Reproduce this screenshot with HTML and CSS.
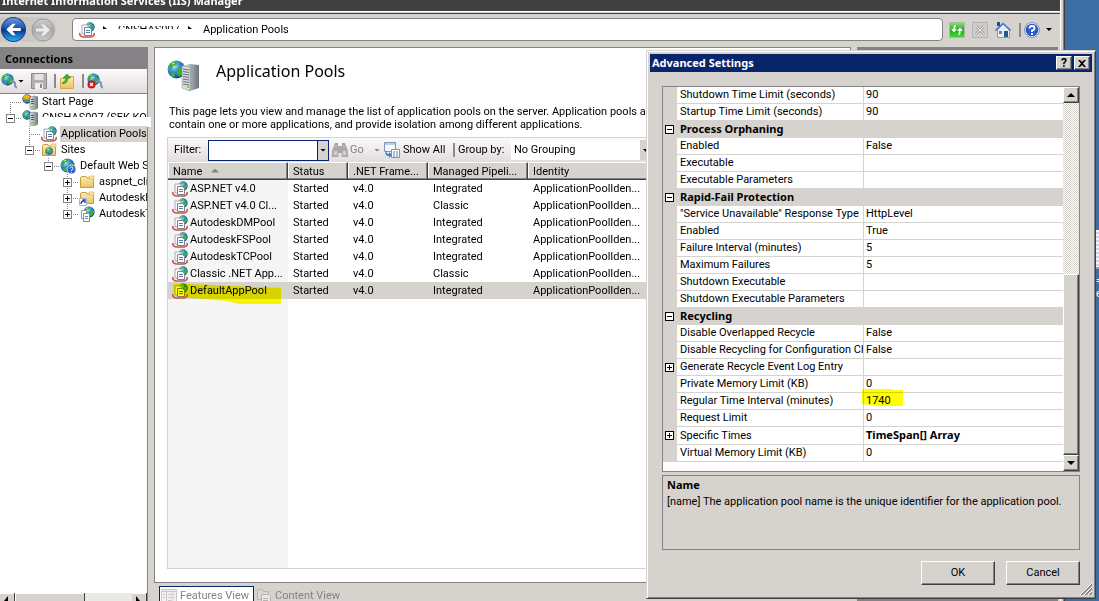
FILE: index.html
```html
<!DOCTYPE html>
<html lang="en">
<head>
<meta charset="utf-8">
<title>Internet Information Services (IIS) Manager</title>
<link rel="stylesheet" href="styles.css">
</head>
<body>
<svg class="defs" aria-hidden="true">
  <defs>
    <radialGradient id="sea" cx=".35" cy=".3" r=".8"><stop offset="0" stop-color="#bfe6ff"/><stop offset=".4" stop-color="#3c8de0"/><stop offset="1" stop-color="#0a2f95"/></radialGradient>
    <linearGradient id="navBlue" x2="0" y2="1"><stop offset="0" stop-color="#6f9ae0"/><stop offset=".45" stop-color="#1c4fb4"/><stop offset=".5" stop-color="#05308c"/><stop offset="1" stop-color="#27b6fa"/></linearGradient>
    <linearGradient id="navGray" x2="0" y2="1"><stop offset="0" stop-color="#d0d0d0"/><stop offset=".5" stop-color="#a9a9a9"/><stop offset="1" stop-color="#c9c9c9"/></linearGradient>
    <linearGradient id="steel" x2="1" y2="0"><stop offset="0" stop-color="#eceef0"/><stop offset=".5" stop-color="#a7adb3"/><stop offset="1" stop-color="#6d747b"/></linearGradient>
    <linearGradient id="manila" x2="0" y2="1"><stop offset="0" stop-color="#fdeeb5"/><stop offset="1" stop-color="#edc15c"/></linearGradient>
    <linearGradient id="leaf" x2="0" y2="1"><stop offset="0" stop-color="#8be07d"/><stop offset=".5" stop-color="#22ab1c"/><stop offset="1" stop-color="#3fe032"/></linearGradient>
  </defs>
  <symbol id="globe" viewBox="0 0 16 16"><circle cx="8" cy="8" r="7.5" fill="url(#sea)"/><path d="M3 3q3-3 6-2l-1 3-3 1-1 3-3-1q0-3 2-4zM9 7l4-2 2 3-2 4-3 2-2-3zM4 10l3 1-1 4-3-2z" fill="#35b336"/><path d="M4 3l3-1-2 2z" fill="#d9ffd0"/></symbol>
  <symbol id="pool" viewBox="0 0 16 16"><use href="#globe" x="6" y="0" width="10" height="10"/><path d="M1 11q-1 3 3 4h8q4-1 3-4" fill="none" stroke="#c9534b" stroke-width="1.600"/><path d="M3 3h6v9H3z" fill="#fff" stroke="#a3abb3"/><path d="M5.500 5.500h5l2 2v6h-7z" fill="#fff" stroke="#7a838c"/><path d="M7 8.500h4M7 10.500h4" stroke="#547cae"/></symbol>
  <symbol id="server" viewBox="0 0 16 16"><use href="#globe" x="0" y="0" width="10" height="10"/><path d="M8 3l4-1 4 1v11l-4 2-4-1z" fill="url(#steel)" stroke="#747a80" stroke-width=".6"/><path d="M9 5.500h3M9 7.500h3M9 9.500h3" stroke="#596068"/><path d="M9 12h3v2H9z" fill="#6adf29"/></symbol>
  <symbol id="start" viewBox="0 0 16 16"><use href="#server" width="16" height="16"/><path d="M0 4l4-4 5 3-2 1v2L3 5z" fill="#f6b21d" stroke="#bf7b0a" stroke-width=".6"/></symbol>
  <symbol id="bigserver" viewBox="0 0 34 34"><use href="#globe" x="0" y="1" width="19" height="19"/><path d="M15 7l8-2 9 1v23l-9 3-8-3z" fill="url(#steel)"/><path d="M15 7l8 1v24l-8-3z" fill="#d8dcdf" stroke="#858b91" stroke-width=".5"/><path d="M16 10l6 1M16 12.500l6 1M16 15l6 1M16 17.500l6 1M16 20l6 1M16 22.500l6 1M16 25l6 1" stroke="#676e75"/><path d="M20 27h2v2h-2z" fill="#8ce000"/></symbol>
  <symbol id="folder" viewBox="0 0 16 16"><path d="M1.500 13.500v-10L3 2.500h4l1 1.500h6.500v9.500z" fill="url(#manila)" stroke="#c99c3e"/><path d="M10 2h5v3h-5z" fill="#fbe69e" stroke="#c99c3e" stroke-width=".5"/></symbol>
  <symbol id="sites" viewBox="0 0 16 16"><use href="#folder" width="16" height="16"/><use href="#globe" x="4" y="5" width="8" height="8"/></symbol>
  <symbol id="site" viewBox="0 0 16 16"><use href="#globe" width="15" height="15"/><circle cx="11.500" cy="11.500" r="4.500" fill="#2e5fc4" stroke="#dfe9fb"/><path d="M10 10.500q0-1.500 1.500-1.500t1.500 1.500-1.500 1.500v1M11.500 14v.8" stroke="#fff" fill="none"/></symbol>
  <symbol id="vdir" viewBox="0 0 16 16"><use href="#folder" width="16" height="16"/><path d="M.5 8.500h7v7h-7z" fill="#fff" stroke="#a9b3cc"/><path d="M2 14q0-3 3-3M3.500 10H6v3" stroke="#2b3f9c" fill="none" stroke-width="1.300"/></symbol>
  <symbol id="webapp" viewBox="0 0 16 16"><use href="#globe" x="4" y="0" width="12" height="12"/><path d="M2.500 4.500h5v8h-5z" fill="#fff" stroke="#959ca3"/><path d="M4.500 7.500h5l1 1v7h-6z" fill="#fff" stroke="#838b93"/><path d="M6 10.500h3M6 12.500h3" stroke="#6a87ad"/></symbol>
  <symbol id="connect" viewBox="0 0 16 16"><use href="#globe" width="13" height="13"/><path d="M9 9l3-1 2 2v3l2 2" stroke="#8198ad" stroke-width="2" fill="none"/></symbol>
  <symbol id="save" viewBox="0 0 16 16"><path d="M.5.500h15v15h-15z" fill="#b4b0b0" stroke="#8e8a8a"/><path d="M3.500 1h9v6h-9z" fill="#e5e2e2"/><path d="M4 10h8v6H4z" fill="#f1efef"/><path d="M9 11h2v4H9z" fill="#8e8a8a"/></symbol>
  <symbol id="up" viewBox="0 0 16 16"><path d="M1.500 15.500V5.500h5l1-2h7v12z" fill="url(#manila)" stroke="#d3aa50"/><path d="M4 11q5-1 5-6h3L8 1 4 5h3q0 3-4 5z" fill="#38b52b" stroke="#1f8415" stroke-width=".5"/></symbol>
  <symbol id="disconnect" viewBox="0 0 16 16"><use href="#connect" width="16" height="16"/><circle cx="4.500" cy="11.500" r="4" fill="#c91616"/><path d="M3 10l3 3M6 10l-3 3" stroke="#fff" stroke-width="1.300"/></symbol>
  <symbol id="back" viewBox="0 0 24 24"><circle cx="12" cy="12" r="11.500" fill="url(#navBlue)" stroke="#25427d"/><path d="M19 10.500h-8l3-4h-3l-6 5.500 6 5.500h3l-3-4h8z" fill="#fff"/></symbol>
  <symbol id="forward" viewBox="0 0 24 24"><circle cx="12" cy="12" r="11" fill="url(#navGray)" stroke="#999"/><path d="M5 10.500h8l-3-4h3l6 5.500-6 5.500h-3l3-4H5z" fill="#ececec"/></symbol>
  <symbol id="refresh" viewBox="0 0 16 16"><path d="M.5.500h15v15h-15z" fill="url(#leaf)" stroke="#a4bfa0"/><path d="M7 3q-3 0-2.500 4H2l3 3.500L8 7H6q0-2 1-4zM9 13q3 0 2.500-4H14l-3-3.500L8 9h2q0 2-1 4z" fill="#fff"/></symbol>
  <symbol id="stop" viewBox="0 0 16 16"><path d="M.5.500h15v15h-15z" fill="#cfcdcc" stroke="#b5b3b2"/><path d="M4 4l8 8M12 4l-8 8" stroke="#a6a3a3" stroke-width="2.500"/><path d="M4 4l8 8M12 4l-8 8" stroke="#eee"/></symbol>
  <symbol id="home" viewBox="0 0 16 16"><path d="M2.500 8v7.500h12V8L8 2z" fill="#e4eefb" stroke="#7b9bcc"/><path d="M.5 8.500L8 1.500l7.500 7" stroke="#4c77c5" stroke-width="1.600" fill="none"/><path d="M2 0h3v4H2z" fill="#2546b6"/><path d="M9 9h4v6H9z" fill="#295392"/><path d="M4 9h3v3H4z" fill="#a27b42"/></symbol>
  <symbol id="help" viewBox="0 0 16 16"><circle cx="8" cy="8" r="7.500" fill="#e9eefb" stroke="#8490ae"/><circle cx="8" cy="8" r="6.300" fill="#285acb"/><path d="M5.500 6.500q0-2.500 2.500-2.500t2.500 2.200Q10.500 8 8 8.500V10M8 11v2" stroke="#fff" stroke-width="1.800" fill="none"/></symbol>
  <symbol id="find" viewBox="0 0 16 16"><path d="M3 1h3v3h4V1h3l3 8v6H9.500v-4h-3v4H0V9z" fill="#a9a6a6"/><path d="M2 9h3v4H2zM11 9h3v4h-3zM4 3v3M12 3v3" fill="#d5d2d2" stroke="#c6c3c3"/></symbol>
  <symbol id="showall" viewBox="0 0 16 16"><path d="M.5.500h11v9H.5z" fill="#f4f7fb" stroke="#7f96b5"/><path d="M1 1h10v2H1z" fill="#b8cfe8"/><path d="M7.500 7.500h8v8h-8z" fill="#fff" stroke="#8394aa"/><path d="M9 10h2M12 10h2M9 12h2M12 12h2M9 14h2M12 14h2" stroke="#5479ad"/><path d="M2 8q0 4 3 4v-2l3 3-3 3v-2q-5 0-3-6z" fill="#2c83dc"/></symbol>
  <symbol id="features" viewBox="0 0 16 16"><path d="M.5 1.500h15v14H.5z" fill="#f3eff2" stroke="#cbc6ca"/><path d="M1 3.500h14M5.500 4v11M11 4v11M7 6.500h3M7 9.500h3M7 12.500h3M12 6.500h2M12 9.500h2M2 6.500h2M2 9.500h2" stroke="#cbc6ca"/></symbol>
  <symbol id="content" viewBox="0 0 16 16"><path d="M1.500 1.500h5l1 2h5v8h-11z" fill="#dbd7d7" stroke="#b8b4b4"/><path d="M5.500 6.500h7l2 2v7h-9z" fill="#eae7e7" stroke="#b8b4b4"/><path d="M7 10.500h5M7 12.500h5" stroke="#b8b4b4"/></symbol>
</svg>

<main class="app">
  <header class="app-title">Internet Information Services (IIS) Manager</header>
  <nav class="navbar">
    <div class="nav-round">
      <button class="flat" aria-label="Back"><svg class="i25"><use href="#back"/></svg></button>
      <button class="flat" aria-label="Forward"><svg class="i24"><use href="#forward"/></svg></button>
    </div>
    <div class="address">
      <svg class="i16"><use href="#pool"/></svg>
      <span class="crumb-arrow erased"></span>
      <span class="crumb-name erased">CNSHAS007</span>
      <span class="crumb-arrow erased"></span>
      <span>Application Pools</span>
    </div>
    <div class="nav-tools">
      <button class="flat" aria-label="Refresh"><svg class="i16"><use href="#refresh"/></svg></button>
      <button class="flat" aria-label="Stop"><svg class="i16"><use href="#stop"/></svg></button>
      <button class="flat" aria-label="Home"><svg class="i16"><use href="#home"/></svg></button>
      <span class="sep"></span>
      <button class="flat help" aria-label="Help"><svg class="i16"><use href="#help"/></svg><i class="down"></i></button>
    </div>
  </nav>

  <div class="workspace">
    <aside class="connections">
      <h2 class="pane-title">Connections</h2>
      <div class="conn-tools">
        <button class="flat" aria-label="Connect"><svg class="i16"><use href="#connect"/></svg><i class="down"></i></button>
        <button class="flat" aria-label="Save"><svg class="i16"><use href="#save"/></svg></button>
        <span class="sep"></span>
        <button class="flat" aria-label="Up"><svg class="i16"><use href="#up"/></svg></button>
        <span class="sep"></span>
        <button class="flat" aria-label="Disconnect"><svg class="i16"><use href="#disconnect"/></svg></button>
      </div>
      <ul class="tree">
        <li class="node d0 first"><i class="leaf"></i><i class="dots"></i><svg class="i16"><use href="#start"/></svg><span>Start Page</span></li>
        <li class="node d0 last"><button class="box" aria-label="Collapse"></button><i class="dots"></i><svg class="i16"><use href="#server"/></svg><span class="erased-node">CNSHAS007 (SEK-KOI</span><i class="smear"></i></li>
        <li class="node d1"><i class="leaf"></i><i class="dots"></i><svg class="i16"><use href="#pool"/></svg><span class="selected">Application Pools</span></li>
        <li class="node d1 last"><button class="box" aria-label="Collapse"></button><i class="dots"></i><svg class="i16"><use href="#sites"/></svg><span>Sites</span></li>
        <li class="node d2 last"><button class="box" aria-label="Collapse"></button><i class="dots"></i><svg class="i16"><use href="#site"/></svg><span>Default Web Site</span></li>
        <li class="node d3"><button class="box plus" aria-label="Expand"></button><i class="dots"></i><svg class="i16"><use href="#folder"/></svg><span>aspnet_client</span></li>
        <li class="node d3"><button class="box plus" aria-label="Expand"></button><i class="dots"></i><svg class="i16"><use href="#vdir"/></svg><span>AutodeskDM</span></li>
        <li class="node d3 last"><button class="box plus" aria-label="Expand"></button><i class="dots"></i><svg class="i16"><use href="#webapp"/></svg><span>AutodeskTC</span></li>
      </ul>
      <div class="hscroll"><button class="arrow-left" aria-label="Scroll left"></button><i class="hthumb"></i><button class="arrow-right" aria-label="Scroll right"></button></div>
    </aside>

    <section class="center">
      <div class="feature">
        <div class="feature-head"><svg class="i34"><use href="#bigserver"/></svg><h1>Application Pools</h1></div>
        <p class="intro">This page lets you view and manage the list of application pools on the server. Application pools are<br>contain one or more applications, and provide isolation among different applications.</p>
        <div class="list">
          <div class="filterbar">
            <label for="filter">Filter:</label>
            <div class="combo"><input id="filter" type="text"><button aria-label="Filter history"><i class="down"></i></button></div>
            <button class="flat go"><svg class="i16"><use href="#find"/></svg><span>Go</span><i class="down"></i></button>
            <button class="flat show"><svg class="i16"><use href="#showall"/></svg><span>Show All</span></button>
            <span class="sep"></span>
            <label for="group">Group by:</label>
            <div class="group"><select id="group"><option>No Grouping</option></select><i class="down"></i></div>
          </div>
          <table class="pools">
            <thead><tr><th class="c-name">Name <i class="sort"></i></th><th class="c-status">Status</th><th class="c-net">.NET Frame...</th><th class="c-pipe">Managed Pipeli...</th><th class="c-id">Identity</th><th></th></tr></thead>
            <tbody>
              <tr><td><div class="pool"><svg class="i16"><use href="#pool"/></svg>ASP.NET v4.0</div></td><td>Started</td><td>v4.0</td><td>Integrated</td><td>ApplicationPoolIden...</td><td></td></tr>
              <tr><td><div class="pool"><svg class="i16"><use href="#pool"/></svg>ASP.NET v4.0 Cl...</div></td><td>Started</td><td>v4.0</td><td>Classic</td><td>ApplicationPoolIden...</td><td></td></tr>
              <tr><td><div class="pool"><svg class="i16"><use href="#pool"/></svg>AutodeskDMPool</div></td><td>Started</td><td>v4.0</td><td>Integrated</td><td>ApplicationPoolIden...</td><td></td></tr>
              <tr><td><div class="pool"><svg class="i16"><use href="#pool"/></svg>AutodeskFSPool</div></td><td>Started</td><td>v4.0</td><td>Integrated</td><td>ApplicationPoolIden...</td><td></td></tr>
              <tr><td><div class="pool"><svg class="i16"><use href="#pool"/></svg>AutodeskTCPool</div></td><td>Started</td><td>v4.0</td><td>Integrated</td><td>ApplicationPoolIden...</td><td></td></tr>
              <tr><td><div class="pool"><svg class="i16"><use href="#pool"/></svg>Classic .NET App...</div></td><td>Started</td><td>v4.0</td><td>Classic</td><td>ApplicationPoolIden...</td><td></td></tr>
              <tr class="current"><td><div class="pool"><svg class="i16"><use href="#pool"/></svg>DefaultAppPool<svg class="marker pool-marker" viewBox="0 0 108 22"><path d="M0 2h18l90 4v16H66l-12-3-36-3-17-3z"/></svg></div></td><td>Started</td><td>v4.0</td><td>Integrated</td><td>ApplicationPoolIden...</td><td></td></tr>
            </tbody>
          </table>
        </div>
      </div>
      <div class="tabs">
        <button class="tab active"><svg class="i16"><use href="#features"/></svg>Features View</button>
        <button class="tab"><svg class="i16"><use href="#content"/></svg>Content View</button>
      </div>
    </section>
    <aside class="actions"></aside>
  </div>
</main>

<div class="desktop-item"><i class="thumb"></i><span>=</span><span>e</span></div>

<section class="dialog" role="dialog" aria-labelledby="dlg">
  <header class="dlg-title"><h2 id="dlg">Advanced Settings</h2><button aria-label="Help">?</button><button aria-label="Close"><svg class="x" viewBox="0 0 8 7"><path d="M0 0h2l2 2 2-2h2L5 3.500 8 7H6L4 5 2 7H0l3-3.500z"/></svg></button></header>
  <div class="grid">
    <table class="props">
      <tbody>
        <tr><td></td><td>Shutdown Time Limit (seconds)</td><td>90</td></tr>
        <tr><td></td><td>Startup Time Limit (seconds)</td><td>90</td></tr>
        <tr class="cat"><td><button class="box" aria-label="Collapse"></button></td><th colspan="2">Process Orphaning</th></tr>
        <tr><td></td><td>Enabled</td><td>False</td></tr>
        <tr><td></td><td>Executable</td><td></td></tr>
        <tr><td></td><td>Executable Parameters</td><td></td></tr>
        <tr class="cat"><td><button class="box" aria-label="Collapse"></button></td><th colspan="2">Rapid-Fail Protection</th></tr>
        <tr><td></td><td>"Service Unavailable" Response Type</td><td>HttpLevel</td></tr>
        <tr><td></td><td>Enabled</td><td>True</td></tr>
        <tr><td></td><td>Failure Interval (minutes)</td><td>5</td></tr>
        <tr><td></td><td>Maximum Failures</td><td>5</td></tr>
        <tr><td></td><td>Shutdown Executable</td><td></td></tr>
        <tr><td></td><td>Shutdown Executable Parameters</td><td></td></tr>
        <tr class="cat"><td><button class="box" aria-label="Collapse"></button></td><th colspan="2">Recycling</th></tr>
        <tr><td></td><td>Disable Overlapped Recycle</td><td>False</td></tr>
        <tr><td></td><td>Disable Recycling for Configuration Changes</td><td>False</td></tr>
        <tr><td><button class="box plus" aria-label="Expand"></button></td><td>Generate Recycle Event Log Entry</td><td></td></tr>
        <tr><td></td><td>Private Memory Limit (KB)</td><td>0</td></tr>
        <tr><td></td><td>Regular Time Interval (minutes)</td><td class="marked">1740<svg class="marker time-marker" viewBox="0 0 41 18"><path d="M0 0h30v1h11v16H16l-16-2z"/></svg></td></tr>
        <tr><td></td><td>Request Limit</td><td>0</td></tr>
        <tr><td><button class="box plus" aria-label="Expand"></button></td><td>Specific Times</td><td><b>TimeSpan[] Array</b></td></tr>
        <tr><td></td><td>Virtual Memory Limit (KB)</td><td>0</td></tr>
      </tbody>
    </table>
    <div class="vscroll"><button aria-label="Scroll up"><i class="up-tri"></i></button><i class="vthumb"></i><button aria-label="Scroll down"><i class="down-tri"></i></button></div>
  </div>
  <div class="hint"><b>Name</b><p>[name] The application pool name is the unique identifier for the application pool.</p></div>
  <footer class="dlg-foot"><button class="push">OK</button><button class="push">Cancel</button></footer>
  <svg class="grip" viewBox="0 0 12 12"><path d="M1 12L12 1M5 12l7-7M9 12l3-3" stroke="#808080" stroke-width="2"/><path d="M0 12L12 0M4 12l8-8M8 12l4-4" stroke="#fff"/></svg>
</section>
</body>
</html>
```
FILE: styles.css
```css
* { box-sizing: border-box; }
body {
  margin: 0;
  height: 100vh;
  overflow: hidden;
  position: relative;
  background: #3a6ea5;
  color: #000;
  font: 11px/16px Roboto, "Liberation Sans", sans-serif;
}
h1, h2, p, ul { margin: 0; padding: 0; }
h1, h2, b, .props th, .app-title { font-family: "Noto Sans", "Open Sans", sans-serif; }
button, input, select { font: inherit; color: inherit; margin: 0; padding: 0; border-radius: 0; }
svg { display: block; flex: none; }
i { flex: none; }
.defs { position: absolute; width: 0; height: 0; }
.i16 { width: 16px; height: 16px; }
.i24 { width: 24px; height: 24px; }
.i25 { width: 25px; height: 25px; }
.i34 { width: 34px; height: 34px; }
.flat { display: flex; align-items: center; border: 0; background: none; }
.down {
  width: 6px;
  height: 3px;
  background: currentColor;
  clip-path: polygon(0 0, 100% 0, 50% 100%);
}
.sep { flex: none; width: 2px; height: 14px; background: #8c8a8c; }

/* Main window */
.app {
  display: flex;
  flex-direction: column;
  height: 100vh;
  margin-right: 34px;
  background: #d6d3ce;
  border-right: 1px solid #404040;
  box-shadow: inset -1px 0 #808080, inset -3px 0 #d6d3ce, inset -4px 0 #fff;
}
.app-title {
  height: 11px;
  flex: none;
  margin-right: 4px;
  padding-left: 2px;
  overflow: hidden;
  background: #404040;
  color: #fff;
  font-size: 11px;
  font-weight: bold;
  line-height: 2px;
}
.navbar {
  display: flex;
  flex: none;
  align-items: center;
  height: 36px;
  margin-right: 4px;
  padding-right: 8px;
  border-top: 1px solid #fff;
  box-shadow: inset 0 1px #d6d3ce, inset 0 2px #404040;
}
.nav-round {
  display: flex;
  gap: 5px;
  align-items: center;
  width: 56px;
  margin-right: 16px;
  padding-left: 1px;
  border-radius: 0 12px 12px 0;
  background: #cbc8c4;
}
.address {
  flex: 1;
  display: flex;
  align-items: center;
  height: 23px;
  padding-left: 6px;
  background: #fff;
  border: 1px solid #848284;
  border-radius: 4px;
}
.erased { overflow: hidden; }
.crumb-arrow { width: 4px; height: 3px; margin: 0 11px 4px 8px; background: #000; clip-path: polygon(0 0, 100% 100%, 0 100%); }
.crumb-name { width: 62px; height: 3px; margin-bottom: 4px; line-height: 8px; }
.nav-tools { display: flex; align-items: center; gap: 7px; margin-left: 6px; }
.nav-tools .sep { margin-left: 1px; }
.help { gap: 6px; margin-left: -4px; }

.workspace { display: flex; flex: 1; min-height: 0; margin-right: 6px; }

/* Connections pane */
.connections {
  display: flex;
  flex-direction: column;
  flex: none;
  width: 148px;
  border-right: 1px solid #848284;
  background: #fff;
}
.pane-title {
  flex: none;
  height: 22px;
  padding-left: 5px;
  background: #848284;
  font-size: 11px;
  line-height: 23px;
}
.conn-tools {
  display: flex;
  flex: none;
  align-items: center;
  gap: 7px;
  height: 25px;
  padding-left: 1px;
  border-bottom: 1px solid #848284;
  background: linear-gradient(#fcf9fb, #e2dcdc);
}
.conn-tools .flat { gap: 1px; }
.conn-tools .sep { margin-right: -4px; }
.tree { flex: 1; list-style: none; }
.node {
  --x: 10px;
  --line: 16px;
  --from: 0px;
  position: relative;
  display: flex;
  align-items: center;
  height: 16px;
  white-space: nowrap;
  background: repeating-linear-gradient(#848284 0 1px, transparent 1px 2px) var(--x) var(--from) / 1px var(--line) no-repeat;
}
.node > span { margin-left: 3px; padding: 0 1px; overflow: hidden; }
.node .i16 { z-index: 1; }
.d0 { padding-left: 6px; }
.d1 { padding-left: 25px; --x: 29px; }
.d2 { padding-left: 44px; --x: 48px; }
.d3 { padding-left: 63px; --x: 67px; }
.first { --from: 8px; --line: 8px; }
.last { --line: 8px; }
.leaf { width: 9px; height: 1px; padding-left: 4px; background: repeating-linear-gradient(90deg, #848284 0 1px, transparent 1px 2px) content-box; }
.dots { width: 7px; height: 1px; background: repeating-linear-gradient(90deg, transparent 0 1px, #848284 1px 2px); }
.box {
  display: block;
  flex: none;
  width: 9px;
  height: 9px;
  border: 1px solid #848284;
  background: linear-gradient(#000, #000) center / 5px 1px no-repeat, #fff;
}
.plus { background: linear-gradient(#000, #000) center / 5px 1px no-repeat, linear-gradient(#000, #000) center / 1px 5px no-repeat, #fff; }
.selected { background: #d6d3ce; }
.erased-node { height: 16px; }
.smear { position: absolute; left: 36px; top: 7px; width: 115px; height: 10px; background: #fff; }
.hscroll { display: flex; justify-content: space-between; height: 8px; background: #ebe9e6; }
.hscroll button { width: 15px; border: 1px solid #404040; border-width: 0 1px 0 0; background: #d6d3ce; box-shadow: inset 0 1px #fff; }
.hthumb { width: 70px; margin-right: auto; border-right: 1px solid #404040; background: #d6d3ce; box-shadow: inset 1px 1px #fff; }
.arrow-left::before, .arrow-right::before { content: ""; display: block; width: 4px; height: 5px; margin: 3px 0 0 4px; background: #000; clip-path: polygon(100% 0, 100% 100%, 0 100%); }
.arrow-right::before { clip-path: polygon(0 0, 100% 100%, 0 100%); }

/* Feature page */
.center { display: flex; flex: 1; flex-direction: column; min-width: 0; margin: 0 6px; }
.feature {
  display: flex;
  flex: 1;
  flex-direction: column;
  min-height: 0;
  padding: 11px 12px 13px;
  background: #fff;
  border: 1px solid #848284;
}
.feature-head { display: flex; gap: 15px; }
h1 { font-size: 16px; font-weight: normal; line-height: 25px; }
.intro { margin: 12px 2px 6px; line-height: 13px; white-space: nowrap; overflow: hidden; }
.list {
  display: flex;
  flex: 1;
  flex-direction: column;
  border: 1px solid #d6d3ce;
  background: linear-gradient(#f5f5f5, #f5f5f5) 0 0 / 120px 100% no-repeat;
}
.filterbar {
  display: flex;
  align-items: center;
  height: 24px;
  padding-left: 6px;
  background: linear-gradient(#fcf9fb, #e2dcdc);
  white-space: nowrap;
}
.filterbar label:first-child { width: 34px; }
.combo { display: flex; width: 121px; height: 21px; border: 1px solid #08246b; background: #fff; }
.combo input { flex: 1; min-width: 0; border: 0; outline: 0; background: none; }
.combo button { display: flex; align-items: center; justify-content: center; width: 11px; border: 0; border-left: 1px solid #08246b; background: #d6d3ce; }
.go { width: 48px; gap: 2px; margin-left: 3px; color: #848284; }
.go .down { margin-left: auto; }
.show { gap: 3px; width: 69px; margin-left: 4px; }
.filterbar .sep { margin-right: 3px; }
.filterbar label[for="group"] { width: 53px; }
.group { position: relative; width: 142px; }
.group select { appearance: none; display: block; width: 100%; height: 20px; padding-left: 3px; border: 0; background: linear-gradient(90deg, #fff 129px, #d6d3ce 129px); }
.group .down { position: absolute; left: 132px; top: 9px; }
.pools { width: 100%; table-layout: fixed; border-collapse: separate; border-spacing: 0; }
.pools th {
  height: 18px;
  padding: 0 0 0 5px;
  border: 1px solid #fff;
  border-width: 1px 1px 1px 0;
  border-right-color: #404040;
  border-bottom-color: #404040;
  background: #d6d3ce;
  box-shadow: inset -1px -1px #848284, inset 1px 0 #fff;
  font-weight: normal;
  line-height: 15px;
  text-align: left;
  white-space: nowrap;
}
.pools td { height: 17px; padding: 0 0 0 5px; line-height: 17px; white-space: nowrap; }
.pools td:first-child { padding-left: 4px; }
.c-name { width: 120px; }
.c-status { width: 60px; }
.c-net { width: 80px; }
.c-pipe { width: 100px; }
.c-id { width: 120px; }
.sort { display: inline-block; width: 8px; height: 4px; margin: 0 0 2px 6px; background: #848284; clip-path: polygon(50% 0, 100% 100%, 0 100%); }
.pool { position: relative; display: flex; align-items: center; gap: 2px; height: 17px; }
.current { background: #d6d3ce; }
.marker { position: absolute; fill: #ff0; mix-blend-mode: multiply; }
.pool-marker { left: 1px; top: 0; width: 108px; height: 22px; }
.tabs { display: flex; height: 18px; padding: 3px 0 0 5px; overflow: hidden; color: #848284; }
.tab { display: flex; flex: none; align-items: center; gap: 3px; width: 95px; height: 20px; padding: 0 0 0 1px; border: 1px solid transparent; background: none; white-space: nowrap; }
.tab.active { border-color: #08246b; background: #fff; }
.actions { width: 201px; background: #848284; }

/* Desktop behind the windows */
.desktop-item { position: absolute; right: 0; top: 230px; width: 3px; color: #fff; line-height: 13px; overflow: hidden; }
.desktop-item span { display: block; }
.thumb { display: block; height: 39px; margin-bottom: 5px; border-bottom: 2px solid #9a9aa6; background: repeating-linear-gradient(#f4f4ff 0 2px, #c9d3ee 2px 4px); }

/* Advanced Settings window */
.dialog {
  position: absolute;
  left: 646px;
  right: 3px;
  top: 50px;
  display: flex;
  flex-direction: column;
  padding: 3px 4px 13px;
  background: #d6d3ce;
  border: 1px solid #d6d3ce;
  border-right-color: #404040;
  border-bottom-color: #404040;
  box-shadow: inset 1px 1px #fff, inset -1px -1px #848284;
}
.dlg-title { display: flex; flex: none; align-items: center; height: 18px; margin: 0 -1px; padding: 0 2px; background: #08246b; color: #fff; }
.dlg-title h2 { flex: 1; font-size: 11px; line-height: 18px; }
.dlg-title button, .vscroll button, .push {
  display: flex;
  align-items: center;
  justify-content: center;
  border: 1px solid #fff;
  border-right-color: #404040;
  border-bottom-color: #404040;
  background: #d6d3ce;
  box-shadow: inset -1px -1px #848284;
  color: #000;
}
.dlg-title button { width: 16px; height: 14px; font-weight: bold; font-size: 12px; line-height: 12px; }
.dlg-title button:last-child { margin-left: 2px; }
.x { width: 8px; height: 7px; }
.grid { display: flex; flex: none; height: 386px; margin: 14px 11px 0; border: 1px solid #848284; background: #fff; }
.grid .props { flex: 1; width: 100%; height: 374px; table-layout: fixed; border-collapse: separate; border-spacing: 0; min-width: 0; }
.props td, .props th { height: 17px; padding: 0 0 0 3px; overflow: hidden; border-bottom: 1px solid #d6d3ce; line-height: 16px; text-align: left; white-space: nowrap; }
.props td:first-child { width: 14px; padding: 0 0 0 2px; background: #d6d3ce; }
.props td:nth-child(2) { width: 187px; border-right: 1px solid #d6d3ce; }
.props td:nth-child(3) { padding-left: 2px; }
.props .cat th { background: #d6d3ce; }
.props .box { border-color: #000; }
.props .marked { position: relative; overflow: visible; }
.time-marker { left: -2px; top: -4px; width: 41px; height: 18px; }
.vscroll { display: flex; flex: none; flex-direction: column; width: 16px; background: repeating-conic-gradient(#fff 0 25%, #d6d3ce 0 50%) 0 0 / 2px 2px; }
.vscroll button { height: 16px; }
.vthumb { height: 181px; margin-top: auto; border: 1px solid #fff; border-right-color: #404040; border-bottom-color: #404040; background: #d6d3ce; box-shadow: inset -1px -1px #848284; }
.up-tri, .down-tri { width: 8px; height: 4px; background: #000; clip-path: polygon(0 0, 100% 0, 50% 100%); }
.up-tri { clip-path: polygon(50% 0, 100% 100%, 0 100%); }
.hint { flex: none; height: 75px; margin: 3px 11px 0; padding: 1px 4px; border: 1px solid #848284; white-space: nowrap; }
.dlg-foot { display: flex; justify-content: flex-end; gap: 11px; margin: 11px 11px 0; }
.push { width: 74px; height: 24px; }
.grip { position: absolute; right: 3px; bottom: 3px; width: 12px; height: 12px; }
```
